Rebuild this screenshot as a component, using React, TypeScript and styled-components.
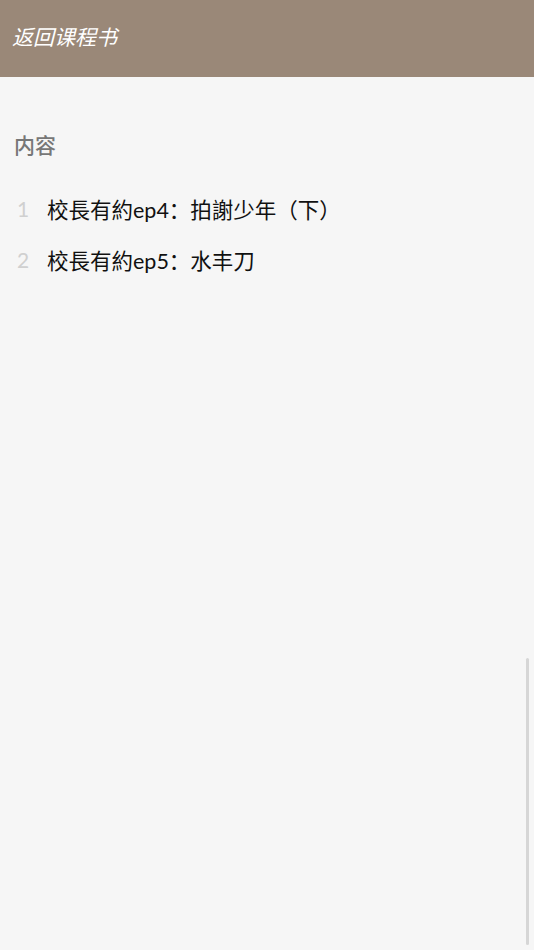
import React from 'react'
import styled, { createGlobalStyle } from 'styled-components'

const GlobalStyle = createGlobalStyle`
  html, body {
    margin: 0;
    padding: 0;
    background: #f6f6f6;
  }
  body {
    font-family: Lato, "Noto Sans CJK SC", "Noto Sans CJK TC", sans-serif;
  }
`

const Page = styled.div`
  position: relative;
  width: 534px;
  height: 950px;
  overflow: hidden;
  background: #f6f6f6;
`

const Header = styled.header`
  height: 77px;
  background: #9a8878;
  display: flex;
  align-items: center;
  padding: 0 12px 5px;
  box-sizing: border-box;
`

const BackTitle = styled.div`
  color: #ffffff;
  font-size: 21px;
  font-style: italic;
`

const Content = styled.main`
  padding: 52px 14px 0;
`

const SectionTitle = styled.h2`
  margin: 0 0 31px;
  font-size: 21px;
  font-weight: 500;
  color: #777777;
  line-height: 32px;
`

const List = styled.ol`
  list-style: none;
  margin: 0;
  padding: 0;
  display: flex;
  flex-direction: column;
  gap: 19px;
`

const Item = styled.li`
  display: flex;
  align-items: center;
  height: 32px;
`

const Index = styled.span`
  width: 33px;
  padding-left: 3px;
  box-sizing: border-box;
  font-size: 21px;
  color: #d0d0d0;
`

const ItemTitle = styled.span`
  font-size: 21.5px;
  color: #111111;
`

const ScrollThumb = styled.div`
  position: absolute;
  right: 5px;
  top: 658px;
  width: 3px;
  height: 287px;
  border-radius: 2px;
  background: #d6d6d6;
`

const lessons = ['校長有約ep4：拍謝少年（下）', '校長有約ep5：水丰刀']

export default function App() {
  return (
    <Page>
      <GlobalStyle />
      <Header>
        <BackTitle>返回课程书</BackTitle>
      </Header>
      <Content>
        <SectionTitle>内容</SectionTitle>
        <List>
          {lessons.map((title, i) => (
            <Item key={title}>
              <Index>{i + 1}</Index>
              <ItemTitle>{title}</ItemTitle>
            </Item>
          ))}
        </List>
      </Content>
      <ScrollThumb />
    </Page>
  )
}
